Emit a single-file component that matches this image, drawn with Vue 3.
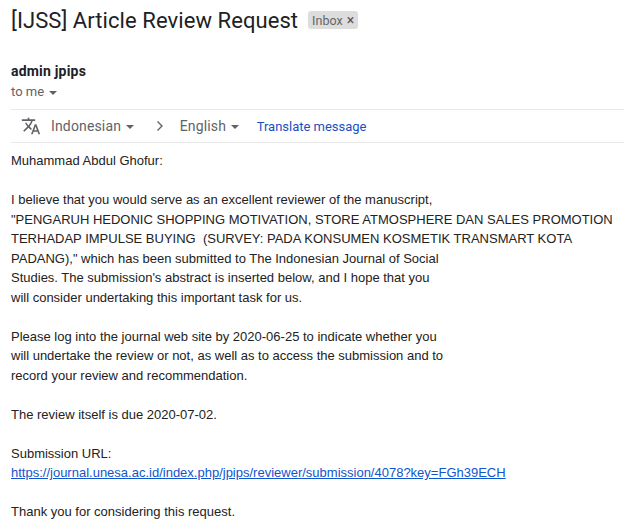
<template>
  <div class="mail">
    <div class="subject-row">
      <h1 class="subject">[IJSS] Article Review Request</h1>
      <span class="label">Inbox <span class="label-x">×</span></span>
    </div>
    <div class="sender">admin jpips</div>
    <div class="to">to me <span class="caret small"></span></div>
    <div class="translate-bar">
      <svg class="translate-icon" width="20" height="20" viewBox="0 0 24 24" fill="#5f6368">
        <path d="M12.87 15.07l-2.54-2.51.03-.03A17.52 17.52 0 0 0 14.07 6H17V4h-7V2H8v2H1v2h11.17A15.7 15.7 0 0 1 9 11.35 15.7 15.7 0 0 1 6.69 8h-2a17.6 17.6 0 0 0 2.98 4.56l-5.09 5.02L4 19l5-5 3.11 3.11.76-2.04zM18.5 10h-2L12 22h2l1.12-3h4.75L21 22h2l-4.5-12zm-2.62 7l1.62-4.33L19.12 17h-3.24z"/>
      </svg>
      <span class="lang first">Indonesian <span class="caret"></span></span>
      <svg class="chevron" width="8" height="12" viewBox="0 0 8 12" fill="none" stroke="#5f6368" stroke-width="1.4">
        <path d="M1.5 1.5L6 6l-4.500 4.500"/>
      </svg>
      <span class="lang">English <span class="caret"></span></span>
      <a class="translate-link">Translate message</a>
    </div>
    <div class="body">
      <p v-for="(block, i) in blocks" :key="i">
        <template v-for="(line, j) in block" :key="j">
          <a v-if="line.startsWith('https')" class="url">{{ line }}</a>
          <template v-else>{{ line }}</template>
          <br v-if="j < block.length - 1" />
        </template>
      </p>
    </div>
  </div>
</template>

<script setup>
const blocks = [
  ['Muhammad Abdul Ghofur:'],
  [
    'I believe that you would serve as an excellent reviewer of the manuscript,',
    '"PENGARUH HEDONIC SHOPPING MOTIVATION, STORE ATMOSPHERE DAN SALES PROMOTION',
    'TERHADAP IMPULSE BUYING  (SURVEY: PADA KONSUMEN KOSMETIK TRANSMART KOTA',
    'PADANG)," which has been submitted to The Indonesian Journal of Social',
    "Studies. The submission's abstract is inserted below, and I hope that you",
    'will consider undertaking this important task for us.',
  ],
  [
    'Please log into the journal web site by 2020-06-25 to indicate whether you',
    'will undertake the review or not, as well as to access the submission and to',
    'record your review and recommendation.',
  ],
  ['The review itself is due 2020-07-02.'],
  [
    'Submission URL:',
    'https://journal.unesa.ac.id/index.php/jpips/reviewer/submission/4078?key=FGh39ECH',
  ],
  ['Thank you for considering this request.'],
]
</script>

<style>
html,
body {
  margin: 0;
  background: #fff;
  overflow: hidden;
}
</style>

<style scoped>
.mail {
  width: 625px;
  height: 525px;
  padding: 0 1px 0 11px;
  box-sizing: border-box;
  overflow: hidden;
  font-family: Roboto, "Liberation Sans", sans-serif;
  color: #222;
}

.subject-row {
  display: flex;
  align-items: center;
  height: 40px;
}

.subject {
  margin: 0;
  font-size: 22px;
  font-weight: 400;
  letter-spacing: 0.07px;
  color: #202124;
  white-space: pre;
}

.label {
  margin-left: 10px;
  padding: 0 4px;
  height: 18px;
  line-height: 18px;
  border-radius: 3px;
  background: #ddd;
  color: #666;
  font-size: 12.5px;
  white-space: pre;
}

.label-x {
  margin-left: 1px;
  color: #555;
  font-size: 14px;
}

.sender {
  margin-top: 22px;
  font-size: 14px;
  font-weight: 700;
  line-height: 18px;
  letter-spacing: 0.2px;
  color: #202124;
}

.to {
  margin-top: 3px;
  font-size: 13px;
  line-height: 18px;
  color: #5f6368;
}

.caret {
  display: inline-block;
  margin-left: 1px;
  vertical-align: middle;
  border-left: 4px solid transparent;
  border-right: 4px solid transparent;
  border-top: 4px solid #5f6368;
}

.caret.small {
  margin-left: 2px;
}

.translate-bar {
  display: flex;
  align-items: center;
  height: 32px;
  margin-top: 8px;
  padding-left: 10px;
  border-top: 1px solid #e8e8e8;
  border-bottom: 1px solid #e8e8e8;
  font-size: 14px;
  letter-spacing: 0.15px;
  color: #5f6368;
}

.translate-icon {
  flex: none;
}

.lang {
  white-space: nowrap;
}

.lang.first {
  margin-left: 10px;
}

.chevron {
  margin: 0 16px 0 22px;
  flex: none;
}

.translate-link {
  margin: 1px 0 0 18px;
  font-size: 13px;
  letter-spacing: -0.01px;
  color: #1a4fc4;
}

.body {
  padding-top: 8px;
  font-family: "Liberation Sans", Arial, sans-serif;
  font-size: 13px;
  line-height: 19.5px;
  color: #222;
  white-space: pre;
}

.body p {
  margin: 0 0 19.5px;
}

.url {
  color: #1155cc;
  text-decoration: underline;
}
</style>
